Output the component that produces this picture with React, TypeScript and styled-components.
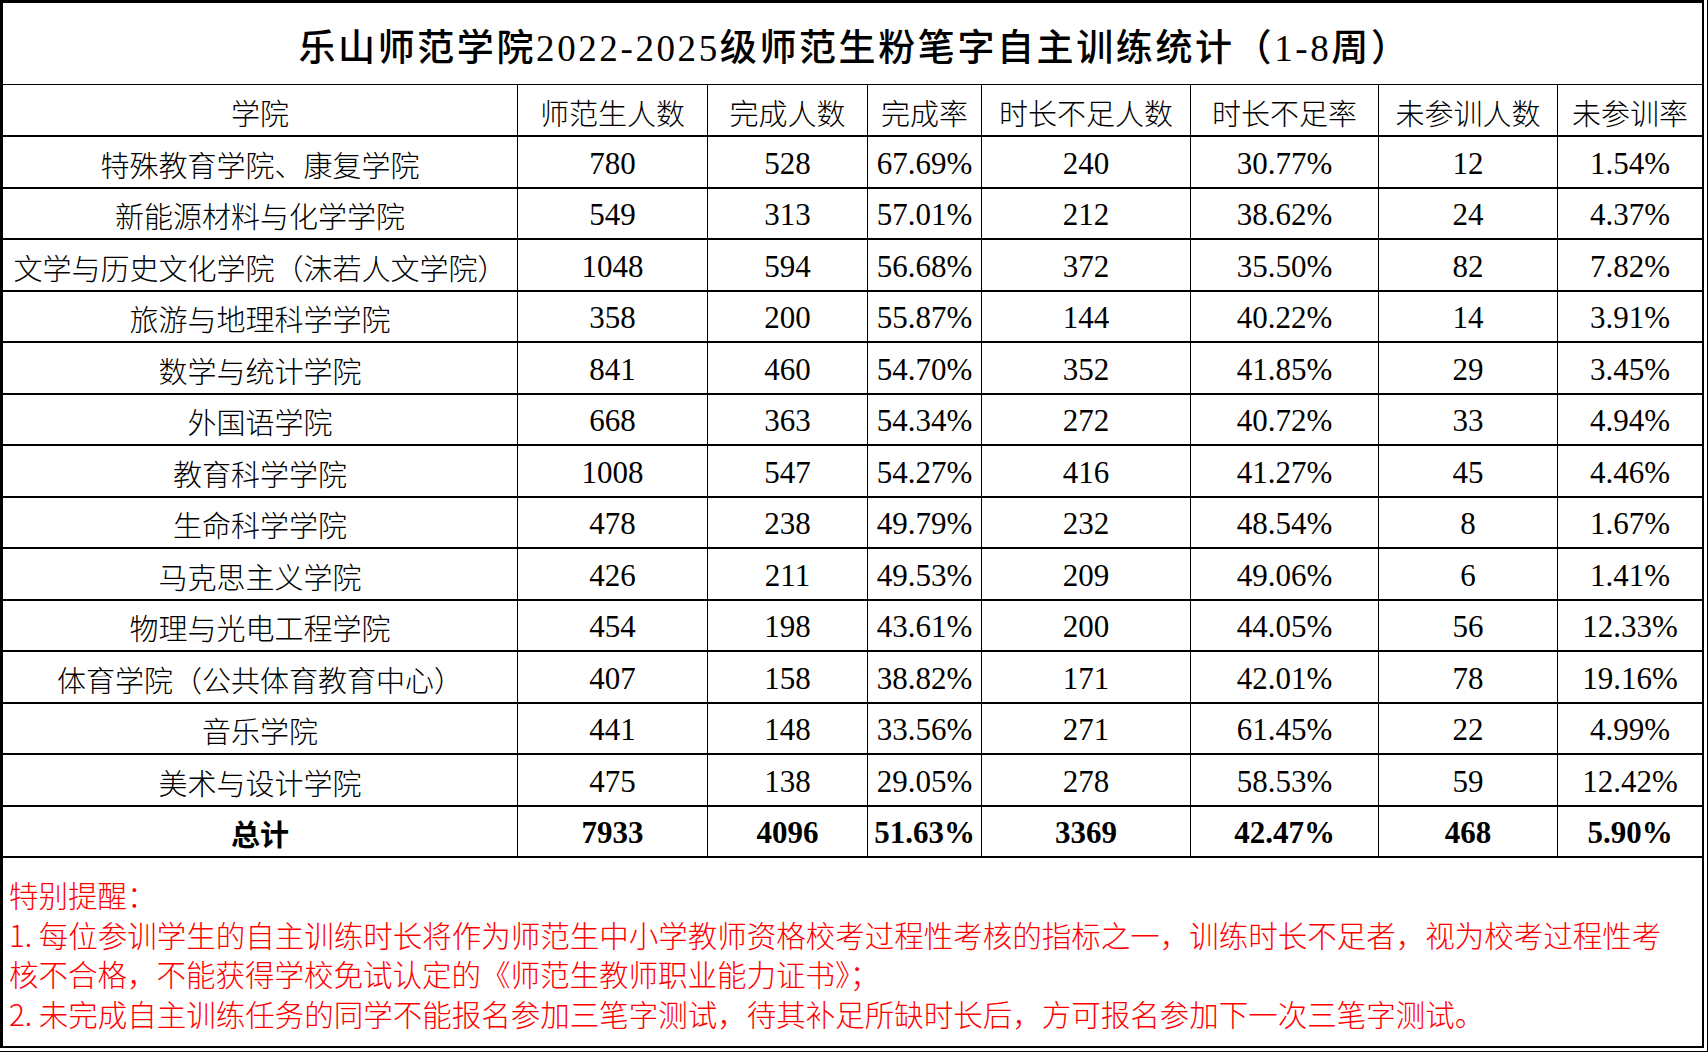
import styled, { createGlobalStyle } from 'styled-components';

const rows = [
  ['特殊教育学院、康复学院', '780', '528', '67.69%', '240', '30.77%', '12', '1.54%'],
  ['新能源材料与化学学院', '549', '313', '57.01%', '212', '38.62%', '24', '4.37%'],
  ['文学与历史文化学院（沫若人文学院）', '1048', '594', '56.68%', '372', '35.50%', '82', '7.82%'],
  ['旅游与地理科学学院', '358', '200', '55.87%', '144', '40.22%', '14', '3.91%'],
  ['数学与统计学院', '841', '460', '54.70%', '352', '41.85%', '29', '3.45%'],
  ['外国语学院', '668', '363', '54.34%', '272', '40.72%', '33', '4.94%'],
  ['教育科学学院', '1008', '547', '54.27%', '416', '41.27%', '45', '4.46%'],
  ['生命科学学院', '478', '238', '49.79%', '232', '48.54%', '8', '1.67%'],
  ['马克思主义学院', '426', '211', '49.53%', '209', '49.06%', '6', '1.41%'],
  ['物理与光电工程学院', '454', '198', '43.61%', '200', '44.05%', '56', '12.33%'],
  ['体育学院（公共体育教育中心）', '407', '158', '38.82%', '171', '42.01%', '78', '19.16%'],
  ['音乐学院', '441', '148', '33.56%', '271', '61.45%', '22', '4.99%'],
  ['美术与设计学院', '475', '138', '29.05%', '278', '58.53%', '59', '12.42%'],
];

const total = ['总计', '7933', '4096', '51.63%', '3369', '42.47%', '468', '5.90%'];

const headers = ['学院', '师范生人数', '完成人数', '完成率', '时长不足人数', '时长不足率', '未参训人数', '未参训率'];

export default function App() {
  return (
    <>
      <GlobalStyle />
      <Page>
        <Frame>
          <Title>乐山师范学院2022-2025级师范生粉笔字自主训练统计（1-8周）</Title>
          <Grid>
            {headers.map((h, i) => (
              <Cell key={h} $last={i === headers.length - 1}>
                {h}
              </Cell>
            ))}
            {rows.map((row) =>
              row.map((v, i) => (
                <Cell key={row[0] + i} $num={i > 0} $last={i === row.length - 1}>
                  {v}
                </Cell>
              )),
            )}
            {total.map((v, i) => (
              <Cell key={'t' + i} $num={i > 0} $bold $last={i === total.length - 1}>
                {v}
              </Cell>
            ))}
          </Grid>
          <Notes>
            <NoteLine>特别提醒：</NoteLine>
            <NoteLine>
              1. 每位参训学生的自主训练时长将作为师范生中小学教师资格校考过程性考核的指标之一，训练时长不足者，视为校考过程性考
            </NoteLine>
            <NoteLine>核不合格，不能获得学校免试认定的《师范生教师职业能力证书》；</NoteLine>
            <NoteLine>
              2. 未完成自主训练任务的同学不能报名参加三笔字测试，待其补足所缺时长后，方可报名参加下一次三笔字测试。
            </NoteLine>
          </Notes>
        </Frame>
      </Page>
    </>
  );
}

const GlobalStyle = createGlobalStyle`
  html, body {
    margin: 0;
    padding: 0;
    background: #ffffff;
  }
  * {
    box-sizing: border-box;
  }
`;

const Page = styled.div`
  width: 1708px;
  height: 1052px;
  border-right: 1px solid #000;
  border-bottom: 1px solid #000;
  background: #fff;
`;

const Frame = styled.div`
  width: 1704px;
  height: 1048px;
  border-top: 3px solid #000;
  border-left: 3px solid #000;
  border-right: 2px solid #000;
  border-bottom: 2px solid #000;
  display: flex;
  flex-direction: column;
`;

const Title = styled.div`
  height: 82px;
  border-bottom: 1px solid #000;
  display: flex;
  align-items: center;
  justify-content: center;
  padding-left: 4px;
  padding-top: 2px;
  font-family: 'Liberation Serif', 'Noto Sans CJK SC', serif;
  font-size: 37px;
  font-weight: 500;
  letter-spacing: 2.6px;
  color: #000;
`;

const Grid = styled.div`
  display: grid;
  grid-template-columns: 515px 190px 160px 114px 209px 188px 179px 1fr;
  grid-template-rows: 52px;
  grid-auto-rows: 51.5px;
`;

const Cell = styled.div<{ $num?: boolean; $bold?: boolean; $last?: boolean }>`
  display: flex;
  align-items: center;
  justify-content: center;
  padding-top: 4px;
  border-bottom: 2px solid #000;
  border-right: ${(p) => (p.$last ? 'none' : '1px solid #000')};
  font-family: 'Liberation Serif', 'Noto Sans CJK SC', serif;
  font-size: ${(p) => (p.$num ? '31px' : '29px')};
  font-weight: ${(p) => (p.$bold ? 700 : 300)};
  white-space: nowrap;
  color: #000;
`;

const Notes = styled.div`
  flex: 1;
  padding: 17px 0 0 6px;
  font-family: 'Noto Sans CJK SC', sans-serif;
  font-size: 29.5px;
  font-weight: 300;
  line-height: 39.5px;
  color: #ff0000;
`;

const NoteLine = styled.div`
  white-space: nowrap;
`;
